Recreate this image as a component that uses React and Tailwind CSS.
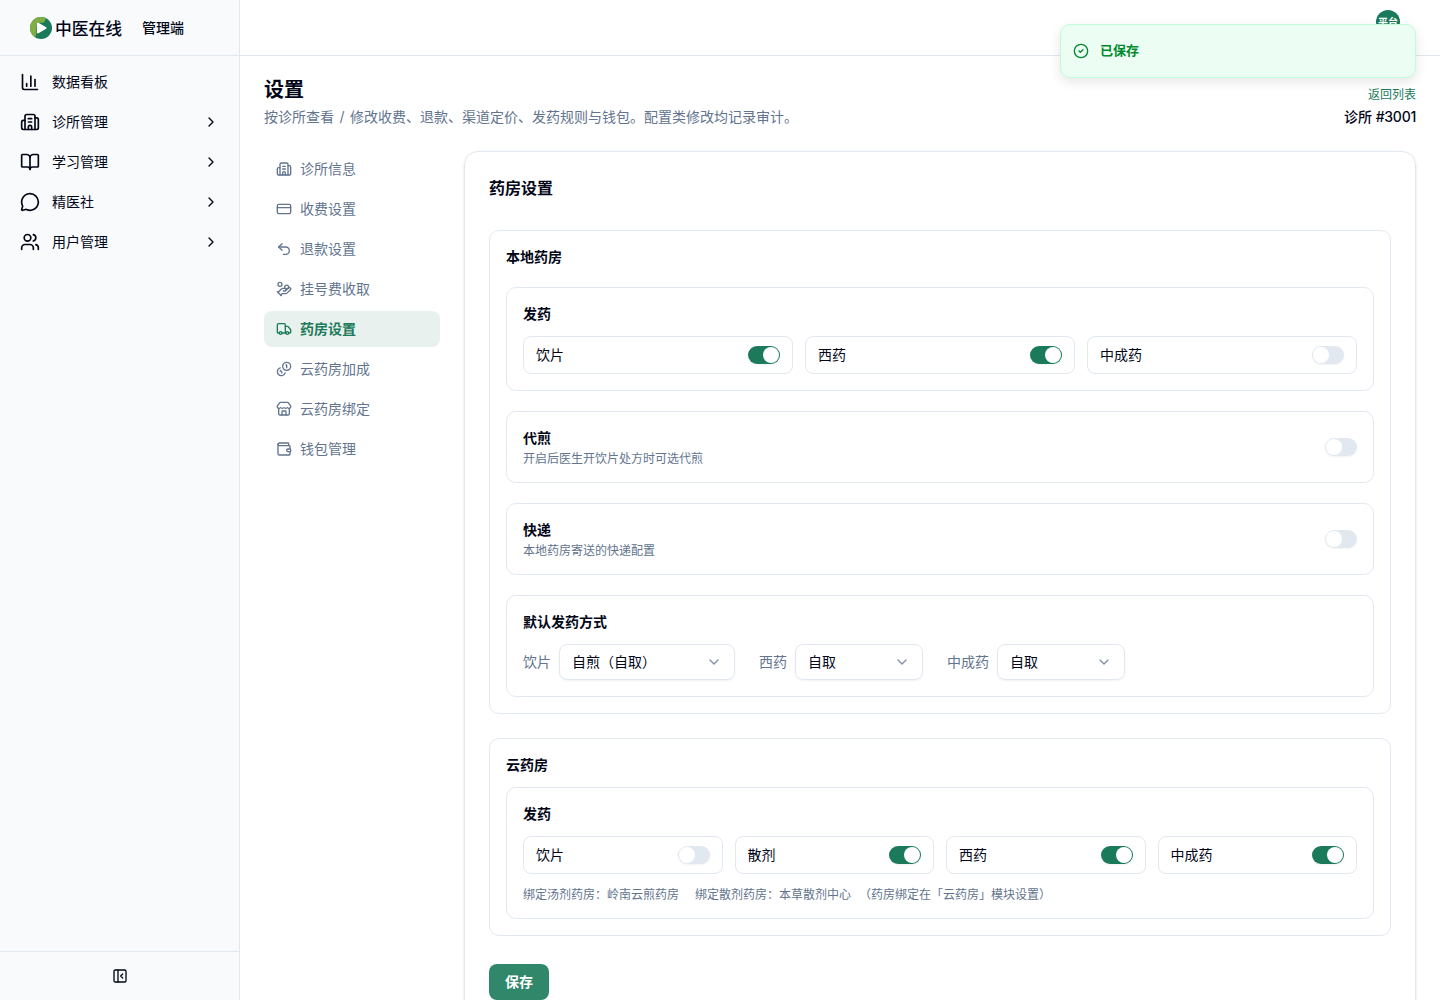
import {
  ChartColumn, Building2, BookOpen, MessageCircle, Users, ChevronRight, ChevronDown, CreditCard,
  Undo2, HandCoins, Truck, Store, Wallet, PanelLeftClose, CircleCheck,
} from "lucide-react";

function CoinPair({ className }) {
  return (
    <svg
      viewBox="0 0 24 24"
      fill="none"
      stroke="currentColor"
      strokeWidth="2"
      strokeLinecap="round"
      strokeLinejoin="round"
      className={className}
    >
      <path d="M13.744 17.736a6 6 0 1 1-7.48-7.48" />
      <path d="M15 6h1v4" />
      <path d="m6.134 14.768.866-.5 2 3.464" />
      <circle cx="16" cy="8" r="6" />
    </svg>
  );
}

const NAV = [
  { icon: ChartColumn, label: "数据看板" },
  { icon: Building2, label: "诊所管理", more: true },
  { icon: BookOpen, label: "学习管理", more: true },
  { icon: MessageCircle, label: "精医社", more: true },
  { icon: Users, label: "用户管理", more: true },
];

const TABS = [
  { icon: Building2, label: "诊所信息" },
  { icon: CreditCard, label: "收费设置" },
  { icon: Undo2, label: "退款设置" },
  { icon: HandCoins, label: "挂号费收取" },
  { icon: Truck, label: "药房设置", active: true },
  { icon: CoinPair, label: "云药房加成" },
  { icon: Store, label: "云药房绑定" },
  { icon: Wallet, label: "钱包管理" },
];

function Logo() {
  return (
    <svg viewBox="0 0 22 22" className="size-[22px] shrink-0">
      <clipPath id="logo-disc">
        <circle cx="11" cy="11" r="11" />
      </clipPath>
      <g clipPath="url(#logo-disc)">
        <rect width="22" height="22" fill="#1a7a5a" />
        <path d="M0 0H16.5L14 5.5L7 6L6.2 17.5L4.5 22H0Z" fill="#7fae42" />
      </g>
      <path d="M8 6.6v8.8L15.6 11Z" fill="#fff" stroke="#fff" strokeWidth="2" strokeLinejoin="round" />
    </svg>
  );
}

function Switch({ on }) {
  return (
    <span
      className={`flex h-[18px] w-8 shrink-0 items-center rounded-full border border-transparent shadow-xs ${
        on ? "justify-end bg-[#1a7a5a]" : "justify-start bg-slate-200"
      }`}
    >
      <span className="size-4 rounded-full bg-white" />
    </span>
  );
}

function Toggle({ label, on }) {
  return (
    <div className="flex h-[38px] items-center justify-between rounded-lg border border-slate-200 px-3">
      <span>{label}</span>
      <Switch on={on} />
    </div>
  );
}

function Box({ children }) {
  return <div className="rounded-[10px] border border-slate-200 p-4">{children}</div>;
}

function SwitchBox({ title, note }) {
  return (
    <Box>
      <div className="flex h-[38px] items-center justify-between">
        <div className="flex h-full flex-col">
          <h4 className="font-semibold">{title}</h4>
          <p className="mt-[3px] text-xs leading-4 text-slate-500">{note}</p>
        </div>
        <Switch />
      </div>
    </Box>
  );
}

function Select({ label, value, wide }) {
  return (
    <div className="flex items-center gap-2">
      <span className="text-slate-500">{label}</span>
      <div
        className={`flex h-9 items-center justify-between rounded-lg border border-slate-200 px-3 shadow-xs ${
          wide ? "w-44" : "w-32"
        }`}
      >
        <span>{value}</span>
        <ChevronDown className="size-4 text-slate-500/80" />
      </div>
    </div>
  );
}

export default function App() {
  return (
    <div
      lang="zh-CN"
      className="relative flex h-screen overflow-hidden bg-white font-['Inter','Noto_Sans_CJK_SC',sans-serif] text-sm text-[#020617] antialiased"
    >
      <aside className="flex w-60 shrink-0 flex-col border-r border-slate-200 bg-slate-50">
        <div className="flex h-14 items-center border-b border-slate-200 pl-[30px]">
          <Logo />
          <span className="ml-[3px] w-[68px] pt-0.5 text-[16.8px] leading-6 font-medium whitespace-nowrap">中医在线</span>
          <span className="ml-[19px] font-medium">管理端</span>
        </div>
        <nav className="flex flex-1 flex-col pt-1.5">
          {NAV.map(({ icon: Icon, label, more }) => (
            <div key={label} className="flex h-10 items-center gap-3 pr-5 pl-5">
              <Icon className="size-5" />
              <span className="flex-1">{label}</span>
              {more && <ChevronRight className="size-4" />}
            </div>
          ))}
        </nav>
        <div className="flex h-[49px] items-center justify-center border-t border-slate-200">
          <PanelLeftClose className="size-4" />
        </div>
      </aside>

      <div className="flex min-w-0 flex-1 flex-col">
        <header className="flex h-14 shrink-0 items-start justify-end border-b border-slate-200 pt-2.5 pr-10">
          <div className="flex size-6 items-center justify-center rounded-full bg-[#1a7a5a] text-[10px] font-semibold text-white">
            平台
          </div>
        </header>

        <main className="flex flex-1 flex-col px-6 pt-5">
          <div className="flex justify-between">
            <div>
              <h1 className="text-xl leading-7 font-semibold">设置</h1>
              <p className="mt-[3px] text-slate-500 [word-spacing:1.6px]">
                按诊所查看 / 修改收费、退款、渠道定价、发药规则与钱包。配置类修改均记录审计。
              </p>
            </div>
            <div className="flex flex-col items-end pt-[11px]">
              <a className="text-xs text-[#1a7a5a]">返回列表</a>
              <span className="mt-1 font-medium">
                诊所 <span className="tracking-[-0.25px]">#3001</span>
              </span>
            </div>
          </div>

          <div className="mt-6 flex gap-6">
            <div className="flex w-44 shrink-0 flex-col gap-1">
              {TABS.map(({ icon: Icon, label, active }) => (
                <div
                  key={label}
                  className={`flex h-9 items-center gap-2 rounded-lg px-3 ${
                    active ? "bg-[#e8f1ee] font-semibold text-[#1a7a5a]" : "text-slate-500"
                  }`}
                >
                  <Icon className="size-4" />
                  <span>{label}</span>
                </div>
              ))}
            </div>

            <section className="flex-1 rounded-[14px] border border-slate-200 p-6 shadow-sm">
              <h2 className="text-base leading-6 font-semibold">药房设置</h2>

              <div className="mt-[30px] flex flex-col gap-5 rounded-[10px] border border-slate-200 p-4">
                <h3 className="font-semibold">本地药房</h3>
                <Box>
                  <h4 className="font-semibold">发药</h4>
                  <div className="mt-3 grid grid-cols-3 gap-3">
                    <Toggle label="饮片" on />
                    <Toggle label="西药" on />
                    <Toggle label="中成药" />
                  </div>
                </Box>
                <SwitchBox title="代煎" note="开启后医生开饮片处方时可选代煎" />
                <SwitchBox title="快递" note="本地药房寄送的快递配置" />
                <Box>
                  <h4 className="font-semibold">默认发药方式</h4>
                  <div className="mt-3 flex gap-6">
                    <Select label="饮片" value="自煎（自取）" wide />
                    <Select label="西药" value="自取" />
                    <Select label="中成药" value="自取" />
                  </div>
                </Box>
              </div>

              <div className="mt-6 flex flex-col gap-3 rounded-[10px] border border-slate-200 p-4">
                <h3 className="font-semibold">云药房</h3>
                <Box>
                  <h4 className="font-semibold">发药</h4>
                  <div className="mt-3 grid grid-cols-4 gap-3">
                    <Toggle label="饮片" />
                    <Toggle label="散剂" on />
                    <Toggle label="西药" on />
                    <Toggle label="中成药" on />
                  </div>
                  <div className="mt-[13px] -mb-px flex text-xs text-slate-500">
                    <span>绑定汤剂药房：岭南云煎药房</span>
                    <span className="ml-4">绑定散剂药房：本草散剂中心</span>
                    <span className="ml-2">（药房绑定在「云药房」模块设置）</span>
                  </div>
                </Box>
              </div>

              <button className="mt-7 flex h-9 w-[60px] items-center justify-center rounded-lg bg-[#31876a] font-semibold text-white">
                保存
              </button>
            </section>
          </div>
        </main>
      </div>

      <div className="absolute top-6 right-6 flex h-[54px] w-[356px] items-center rounded-[10px] border border-[#bffcd9] bg-[#ecfdf3] pl-3 text-[13px] font-semibold text-[#008a2e] shadow-[0_4px_12px_rgba(0,0,0,0.1)]">
        <CircleCheck className="size-4" />
        <span className="ml-[11px] pb-0.5">已保存</span>
      </div>
    </div>
  );
}
